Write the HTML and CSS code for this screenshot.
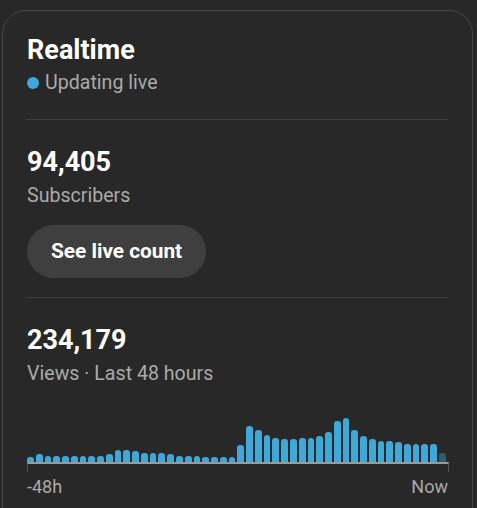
FILE: index.html
```html
<!DOCTYPE html>
<html lang="en">
<head>
<meta charset="utf-8">
<title>Realtime</title>
<link rel="stylesheet" href="styles.css">
</head>
<body>
<section class="card">
  <h2 class="title">Realtime</h2>
  <div class="live"><span class="dot"></span>Updating live</div>
  <hr class="divider">
  <div class="metric">94,405</div>
  <div class="label">Subscribers</div>
  <button class="btn">See live count</button>
  <hr class="divider d2">
  <div class="metric">234,179</div>
  <div class="label">Views · Last 48 hours</div>
  <div class="chart">
    <div class="bars">
      <span class="bar" style="height:5px"></span>
      <span class="bar" style="height:8px"></span>
      <span class="bar" style="height:6px"></span>
      <span class="bar" style="height:6px"></span>
      <span class="bar" style="height:6px"></span>
      <span class="bar" style="height:6px"></span>
      <span class="bar" style="height:6px"></span>
      <span class="bar" style="height:6px"></span>
      <span class="bar" style="height:6px"></span>
      <span class="bar" style="height:8px"></span>
      <span class="bar" style="height:12px"></span>
      <span class="bar" style="height:12px"></span>
      <span class="bar" style="height:11px"></span>
      <span class="bar" style="height:9px"></span>
      <span class="bar" style="height:9px"></span>
      <span class="bar" style="height:9px"></span>
      <span class="bar" style="height:8px"></span>
      <span class="bar" style="height:6px"></span>
      <span class="bar" style="height:6px"></span>
      <span class="bar" style="height:6px"></span>
      <span class="bar" style="height:5px"></span>
      <span class="bar" style="height:5px"></span>
      <span class="bar" style="height:5px"></span>
      <span class="bar" style="height:5px"></span>
      <span class="bar" style="height:17px"></span>
      <span class="bar" style="height:36px"></span>
      <span class="bar" style="height:32px"></span>
      <span class="bar" style="height:27px"></span>
      <span class="bar" style="height:24px"></span>
      <span class="bar" style="height:23px"></span>
      <span class="bar" style="height:23px"></span>
      <span class="bar" style="height:24px"></span>
      <span class="bar" style="height:24px"></span>
      <span class="bar" style="height:26px"></span>
      <span class="bar" style="height:30px"></span>
      <span class="bar" style="height:41px"></span>
      <span class="bar" style="height:44px"></span>
      <span class="bar" style="height:32px"></span>
      <span class="bar" style="height:26px"></span>
      <span class="bar" style="height:23px"></span>
      <span class="bar" style="height:21px"></span>
      <span class="bar" style="height:21px"></span>
      <span class="bar" style="height:20px"></span>
      <span class="bar" style="height:18px"></span>
      <span class="bar" style="height:18px"></span>
      <span class="bar" style="height:18px"></span>
      <span class="bar" style="height:18px"></span>
      <span class="bar bar-now" style="height:9px"></span>
    </div>
    <div class="axis"></div>
    <div class="axis-labels"><span>-48h</span><span>Now</span></div>
  </div>
</section>
</body>
</html>
```
FILE: styles.css
```css
html, body {
  margin: 0;
  padding: 0;
  background: #282828;
}
body {
  font-family: Roboto, "Noto Sans", Arial, sans-serif;
  color: #fff;
  overflow: hidden;
}
.card {
  box-sizing: border-box;
  width: 471px;
  min-height: 540px;
  margin: 10px 0 0 2px;
  padding: 23px 24px 0 24px;
  border: 1px solid #474747;
  border-radius: 24px;
  background: #282828;
  display: flex;
  flex-direction: column;
  align-items: stretch;
}
.title {
  margin: 0;
  font-size: 27px;
  line-height: 32px;
  font-weight: 700;
  color: #fff;
}
.live {
  margin-top: 5px;
  display: flex;
  align-items: center;
  gap: 6px;
  font-size: 19.6px;
  line-height: 24px;
  color: #aaaaaa;
}
.dot {
  width: 12px;
  height: 12px;
  border-radius: 50%;
  background: #3ea8d8;
}
.divider {
  margin: 24px 0 0 0;
  border: 0;
  height: 1px;
  background: #3e3e3e;
}
.metric {
  margin-top: 26px;
  font-size: 27px;
  line-height: 32px;
  font-weight: 700;
  color: #fff;
}
.label {
  margin-top: 6px;
  font-size: 19.6px;
  line-height: 24px;
  color: #aaaaaa;
}
.btn {
  align-self: flex-start;
  margin-top: 17px;
  box-sizing: border-box;
  height: 53px;
  padding: 0 24px 1px 24px;
  border: 0;
  border-radius: 27px;
  background: #3f3f3f;
  color: #fff;
  font-family: inherit;
  font-size: 20.8px;
  font-weight: 700;
  line-height: 24px;
}
.divider.d2 { margin-top: 19px; }
.chart {
  margin-top: 26px;
  display: flex;
  flex-direction: column;
}
.bars {
  height: 50px;
  display: flex;
  align-items: flex-end;
  gap: 2px;
  padding-right: 2px;
}
.bar {
  flex: 1;
  background: #3ea8d8;
  border-radius: 3px 3px 0 0;
}
.bar-now {
  background: #2e5e6e;
}
.axis {
  box-sizing: border-box;
  height: 10px;
  margin-right: -1px;
  border-top: 2px solid #9a9a9a;
  border-left: 1px solid #555;
  border-right: 1px solid #555;
}
.axis-labels {
  margin-top: 3px;
  display: flex;
  justify-content: space-between;
  font-size: 18px;
  line-height: 24px;
  color: #aaaaaa;
}
```
